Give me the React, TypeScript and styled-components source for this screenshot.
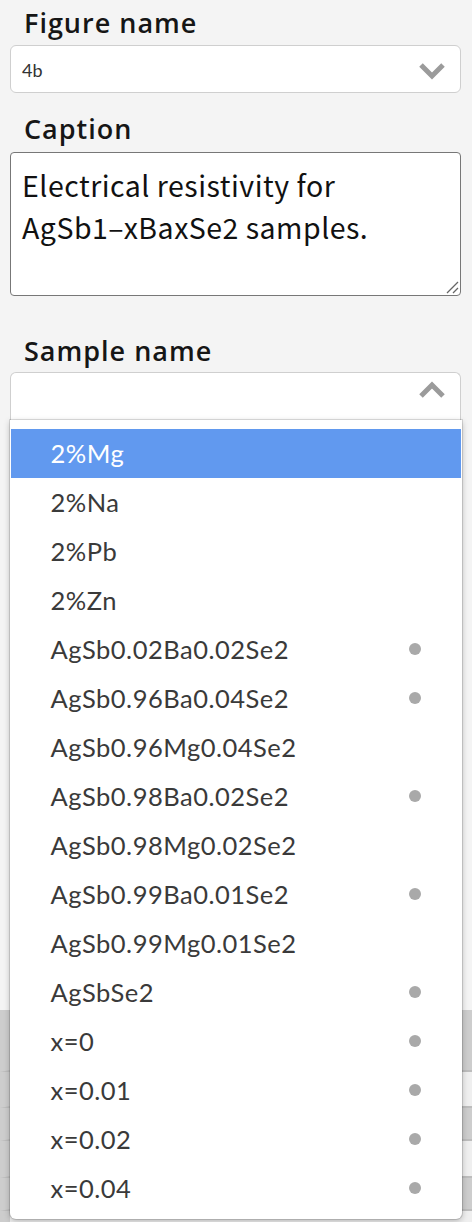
import React from "react";
import styled, { createGlobalStyle } from "styled-components";

const Global = createGlobalStyle`
  html, body { margin: 0; padding: 0; background: #f4f4f4; }
  body { width: 472px; height: 1222px; overflow: hidden; }
  * { box-sizing: border-box; }
`;

const Page = styled.div`
  display: flex;
  flex-direction: column;
  padding: 0 11px 0 10px;
  font-family: "Lato", "Noto Sans", sans-serif;
`;

const Label = styled.div<{ $top: number }>`
  margin: ${(p) => p.$top}px 0 0 14px;
  font-family: "Open Sans", sans-serif;
  font-weight: 600;
  font-size: 27px;
  line-height: 36px;
  height: 36px;
  color: #161616;
  letter-spacing: 1px;
`;

const SelectBox = styled.div<{ $open?: boolean; $top: number }>`
  position: relative;
  height: 48px;
  margin-top: ${(p) => p.$top}px;
  display: flex;
  align-items: center;
  justify-content: space-between;
  padding: 0 14px 0 11px;
  background: #fff;
  border: 1.5px solid #cfcfcf;
  border-radius: ${(p) => (p.$open ? "6px 6px 0 0" : "6px")};
  ${(p) => (p.$open ? "border-bottom: none; align-items: flex-start; padding-top: 7px;" : "padding-top: 2px;")}
`;

const SelectValue = styled.span`
  font-family: "Lato", sans-serif;
  font-size: 18px;
  color: #333;
`;

const Chevron = styled.svg`
  width: 28px;
  height: 20px;
  flex: none;
`;

const TextArea = styled.div`
  position: relative;
  margin-top: 5px;
  height: 144px;
  background: #fff;
  border: 1.5px solid #777;
  border-radius: 4px;
  padding: 11px 11px;
  font-family: "Noto Sans CJK JP", "Noto Sans", sans-serif;
  font-size: 28.5px;
  line-height: 42px;
  letter-spacing: 0.5px;
  color: #111;
`;

const Grip = styled.svg`
  position: absolute;
  right: 1px;
  bottom: 1px;
  width: 14px;
  height: 14px;
`;

const Menu = styled.ul`
  position: absolute;
  left: -1.5px;
  right: -1.5px;
  top: 46.5px;
  margin: 0;
  padding: 9px 0 6px;
  list-style: none;
  background: #fff;
  border-radius: 0 0 6px 6px;
  box-shadow: 0 0 0 1px rgba(0, 0, 0, 0.12), 0 2px 6px rgba(0, 0, 0, 0.25);
  z-index: 5;
`;

const Item = styled.li<{ $active?: boolean }>`
  height: 49px;
  display: flex;
  align-items: center;
  justify-content: space-between;
  padding: 0 40px 0 40px;
  font-family: "Lato", sans-serif;
  font-size: 25.5px;
  letter-spacing: 0.5px;
  color: ${(p) => (p.$active ? "#fff" : "#3a3a3a")};
  background: ${(p) => (p.$active ? "#6199ef" : "transparent")};
  margin: 0 1px;
`;

const Dot = styled.span`
  width: 12px;
  height: 12px;
  border-radius: 50%;
  background: #a9a9a9;
`;

const Table = styled.div`
  margin: 590px -11px 0 -10px;
  display: flex;
  flex-direction: column;
`;

const Row = styled.div<{ $shade: boolean; $h: number }>`
  height: ${(p) => p.$h}px;
  background: ${(p) => (p.$shade ? "#cdcdcd" : "#efefef")};
  border-bottom: 2px solid #bdbdbd;
  border-left: 10px solid #cdcdcd;
`;

const items: [string, boolean][] = [
  ["2%Mg", false],
  ["2%Na", false],
  ["2%Pb", false],
  ["2%Zn", false],
  ["AgSb0.02Ba0.02Se2", true],
  ["AgSb0.96Ba0.04Se2", true],
  ["AgSb0.96Mg0.04Se2", false],
  ["AgSb0.98Ba0.02Se2", true],
  ["AgSb0.98Mg0.02Se2", false],
  ["AgSb0.99Ba0.01Se2", true],
  ["AgSb0.99Mg0.01Se2", false],
  ["AgSbSe2", true],
  ["x=0", true],
  ["x=0.01", true],
  ["x=0.02", true],
  ["x=0.04", true],
];

const rows: [boolean, number][] = [
  [true, 62],
  [false, 36],
  [true, 33],
  [false, 37],
  [true, 33],
  [false, 36],
];

const ChevronIcon = ({ up }: { up?: boolean }) => (
  <Chevron viewBox="0 0 28 20">
    <path
      d={up ? "M3 16 L14 5 L25 16" : "M3 5 L14 16 L25 5"}
      fill="none"
      stroke="#9b9b9b"
      strokeWidth="5"
      strokeLinejoin="miter"
    />
  </Chevron>
);

export default function App() {
  return (
    <>
      <Global />
      <Page>
        <Label $top={5}>Figure name</Label>
        <SelectBox $top={4}>
          <SelectValue>4b</SelectValue>
          <ChevronIcon />
        </SelectBox>
        <Label $top={18}>Caption</Label>
        <TextArea>
          Electrical resistivity for
          <br />
          AgSb1–xBaxSe2 samples.
          <Grip viewBox="0 0 14 14">
            <path d="M2 13 L13 2 M8 13 L13 8" stroke="#666" strokeWidth="1.3" />
          </Grip>
        </TextArea>
        <Label $top={37}>Sample name</Label>
        <SelectBox $open $top={3}>
          <span />
          <ChevronIcon up />
          <Menu>
            {items.map(([name, dot], i) => (
              <Item key={name} $active={i === 0}>
                <span>{name}</span>
                {dot && <Dot />}
              </Item>
            ))}
          </Menu>
        </SelectBox>
        <Table>
          {rows.map(([s, h], i) => (
            <Row key={i} $shade={s} $h={h} />
          ))}
        </Table>
      </Page>
    </>
  );
}
